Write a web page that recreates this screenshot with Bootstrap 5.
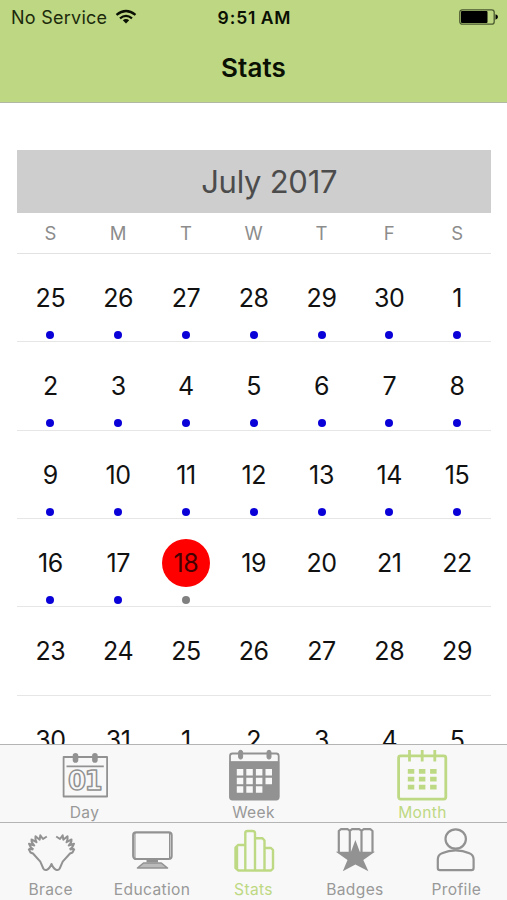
<!DOCTYPE html>
<html lang="en">
<head>
<meta charset="utf-8">
<meta name="viewport" content="width=device-width, initial-scale=1">
<title>Stats</title>
<link href="https://cdn.jsdelivr.net/npm/bootstrap@5.3.0/dist/css/bootstrap.min.css" rel="stylesheet">
<style>
  body { font-family: Inter, "Liberation Sans", sans-serif; color: #111; }
  .app { height: 900px; }
  .topbar { height: 103px; background: #bdd783; border-bottom: 1px solid #b0b8a4; color: #0a1004; }
  .status { height: 34px; padding: 0 9px 0 11px; font-size: 18px; line-height: 35px; }
  .status > * { flex: 1 1 0; }
  .carrier { letter-spacing: .25px; white-space: nowrap; color: #1c2a0c; }
  .clock { font-weight: 600; font-size: 17.5px; letter-spacing: .9px; word-spacing: -1px; }
  .page-title { font-size: 26px; font-weight: 600; line-height: 67px; letter-spacing: .1px; }
  .calendar { padding: 46.8px 16px 0 16.5px; min-height: 0; }
  .month-name { height: 63px; line-height: 64px; padding-left: 31px; background: #cecece; color: #4c4c4c; font-size: 31px; letter-spacing: -.25px; }
  .weekdays { height: 41px; line-height: 41px; font-size: 18.5px; color: #8c8c8c; border-bottom: 1px solid #e2e2e2; }
  .week { height: 88.4px; border-bottom: 1px solid #e6e6e6; font-size: 25px; letter-spacing: -.4px; }
  .num { width: 48px; height: 48px; line-height: 48px; margin-top: 20px; border-radius: 50%; }
  .today { background: #f00; color: #400; }
  .dot { width: 8px; height: 8px; margin-top: 9px; border-radius: 50%; background: #0a00d8; }
  .dot-pending { background: #808080; }
  .tabs { background: #f8f8f8; border-top: 1px solid #b4b4b4; color: #929292; font-size: 15.6px; letter-spacing: .35px; }
  .tabs svg { display: block; fill: none; stroke: currentColor; stroke-linejoin: round; }
  .range-tabs, .main-tabs { height: 78px; padding-top: 3px; }
  .tabs span { line-height: 21px; color: #999; }
  .main-tabs span { margin-top: 3px; }
  .tabs .current, .tabs .current span { color: #bed983; }
  .digits { font: bold 26px "DejaVu Sans", sans-serif; letter-spacing: 0; }
</style>
<script src="https://cdn.jsdelivr.net/npm/bootstrap@5.3.0/dist/js/bootstrap.bundle.min.js"></script>
</head>
<body class="bg-white overflow-hidden">
<div class="app d-flex flex-column overflow-hidden">
  <header class="topbar flex-shrink-0 text-center">
    <div class="status d-flex align-items-center">
      <div class="carrier d-flex align-items-center gap-2">No Service
        <svg width="22" height="16" viewBox="0 0 22 16" fill="none" stroke="#0a1004" stroke-width="2.3"><path d="M1.5 5.8Q11-1.8 20.500 5.800M5 9.300Q11 4.400 17 9.300"/><path d="M11 14.500 7.800 11.300Q11 8.900 14.200 11.300Z" fill="#0a1004" stroke="none"/></svg>
      </div>
      <div class="clock text-nowrap">9:51 AM</div>
      <div class="d-flex justify-content-end">
        <svg width="39" height="16" viewBox="0 0 39 16"><rect x=".8" y=".8" width="34.400" height="14.400" rx="2.500" fill="none" stroke="#4c5a30" stroke-width="1.300"/><rect x="2" y="2" width="26.500" height="12" rx="1"/><path d="M36.500 5.300q2.500.8 2.500 2.700t-2.500 2.700Z"/></svg>
      </div>
    </div>
    <div class="page-title">Stats</div>
  </header>

  <main class="calendar flex-grow-1 overflow-hidden text-center">
    <div class="month-name">July 2017</div>
    <div class="weekdays row g-0"><div class="col">S</div><div class="col">M</div><div class="col">T</div><div class="col">W</div><div class="col">T</div><div class="col">F</div><div class="col">S</div></div>
    <div id="weeks"></div>
  </main>

  <nav class="tabs range-tabs row g-0 flex-shrink-0">
    <div class="col d-flex flex-column align-items-center">
      <svg width="56" height="54" viewBox="0 0 56 54" stroke-width="1.800"><rect x="6.600" y="9" width="43.500" height="39.500"/><path d="M9.500 18.300H46.800"/><rect x="16.600" y="5.800" width="3.800" height="8" rx="1.900" fill="currentColor"/><rect x="36" y="5.800" width="3.800" height="8" rx="1.900" fill="currentColor"/><text class="digits" x="11 27.500" y="42.300" stroke-width="1.500">01</text></svg>
      <span>Day</span>
    </div>
    <div class="col d-flex flex-column align-items-center">
      <svg width="56" height="54" viewBox="0 0 56 54"><rect x="4" y="5.500" width="48.700" height="46" rx="2.500" stroke-width="1.800"/><path d="M4 13.700H52.700V49q0 2.500-2.500 2.500H6.500Q4 51.500 4 49Z" fill="currentColor"/><rect x="12.600" y="2.300" width="4" height="8.800" rx="2" fill="currentColor"/><rect x="41" y="2.300" width="4" height="8.800" rx="2" fill="currentColor"/><path fill="#f8f8f8" stroke="none" d="M10.800 21h6.500v6.500h-6.500zM20.300 21h6.500v6.500h-6.500zM29.900 21h6.500v6.500h-6.500zM39.500 21h6.500v6.500h-6.500zM10.800 29.700h6.500v6.500h-6.500zM20.300 29.700h6.500v6.500h-6.500zM29.900 29.700h6.500v6.500h-6.500zM39.500 29.700h6.500v6.500h-6.500zM10.800 38.300h6.500v6.500h-6.500zM20.300 38.300h6.500v6.500h-6.500zM29.900 38.300h6.500v6.500h-6.500z"/></svg>
      <span>Week</span>
    </div>
    <div class="col current d-flex flex-column align-items-center">
      <svg width="56" height="54" viewBox="0 0 56 54" stroke-width="2.800"><rect x="3.600" y="7.900" width="47.200" height="43.200" rx="2"/><path d="M14.500 2v11.500M27.200 2v11.500M39.800 2v11.500"/><path fill="currentColor" stroke="none" d="M12.800 21h6.500v4.800h-6.500zM23.900 21h6.500v4.800h-6.500zM35.100 21h6.500v4.800h-6.500zM12.800 28.800h6.500v4.800h-6.500zM23.900 28.800h6.500v4.800h-6.500zM35.100 28.800h6.500v4.800h-6.500zM12.800 36.700h6.500v4.800h-6.500zM23.900 36.700h6.500v4.800h-6.500zM35.100 36.700h6.500v4.800h-6.500z"/></svg>
      <span>Month</span>
    </div>
  </nav>

  <nav class="tabs main-tabs row g-0 flex-shrink-0">
    <div class="col d-flex flex-column align-items-center">
      <svg width="56" height="50" viewBox="0 0 56 50" stroke-width="2"><path d="M5.600 22.800 7.500 26.500 10 27.500 17.300 35.700 20.300 42.500Q21.500 44.500 24 43.700 26.300 43 28.500 38 30.700 43 33 43.700 35.500 44.500 36.700 42.500L39.700 35.700 47 27.500 49.500 26.500 51.400 22.800"/><path d="M10 23.500 5.600 22.800M10.500 23.500Q7.500 22 6 17.700L11.300 19.500Q8.300 17 8.500 13.500L13.500 16.200Q11.800 13.500 12.500 10.300L16.700 13.700 17.300 9.300 20 13 23.800 10.500M47 23.500 51.400 22.800M46.500 23.500Q49.500 22 51 17.700L45.700 19.500Q48.700 17 48.500 13.500L43.500 16.200Q45.200 13.500 44.500 10.300L40.300 13.700 39.700 9.300 37 13 33.200 10.500"/></svg>
      <span>Brace</span>
    </div>
    <div class="col d-flex flex-column align-items-center">
      <svg width="56" height="50" viewBox="0 0 56 50" stroke-width="2.200"><rect x="9.200" y="6.300" width="38.400" height="26.700" rx="3"/><path d="M45.500 7v25M11 7v25" stroke-width="1"/><path d="M22.500 33.500h11.500v3H22.500Z" fill="currentColor" stroke="none"/><path d="M19.500 37H37.300L43.500 42H13.500Z" fill="#bbb" stroke-width="1.600"/></svg>
      <span>Education</span>
    </div>
    <div class="col current d-flex flex-column align-items-center">
      <svg width="56" height="50" viewBox="0 0 56 50" stroke-width="2.400"><path d="M19.300 19H12L9.500 21.500V42L12.500 44.500H19.300ZM19.300 44.500V7Q19.300 5 21.500 5H26.500Q29 5 29 7V44.500ZM29 12.300H36.500L38.500 14.500V44.500H29M38.500 22H45L47 24V42.500L45 44.500H38.500M11 20v24"/></svg>
      <span>Stats</span>
    </div>
    <div class="col d-flex flex-column align-items-center">
      <svg width="56" height="50" viewBox="0 0 56 50" stroke-width="2.200"><path d="M11.800 26V5l2-1.800H20.800l2 1.800V26M22.800 5l2-1.800H32.500l2 1.800V26M34.500 5l2-1.800H43.500l2 1.800V26"/><path d="M28.400 14 32.800 25.800H48L36.300 34 41.400 45.300 28.400 38.500 15.800 45.300 20.500 34 8.800 25.800H24Z" fill="currentColor" stroke="none"/></svg>
      <span>Badges</span>
    </div>
    <div class="col d-flex flex-column align-items-center">
      <svg width="56" height="50" viewBox="0 0 56 50" stroke-width="2.200"><ellipse cx="27.700" cy="13" rx="10.200" ry="9.700"/><path d="M9.800 42V33.500Q9.800 29 14 27.300 20.500 24.300 27.700 24.300T41.400 27.300Q45.600 29 45.600 33.500V42Q45.600 44.200 43.500 44.200H12Q9.800 44.200 9.800 42Z"/></svg>
      <span>Profile</span>
    </div>
  </nav>
</div>
<script>
  // Six weeks starting Sunday, June 25; entries are logged through July 17.
  const start = new Date(2017, 5, 25);
  let html = '';
  for (let w = 0; w < 6; w++) {
    html += '<div class="week row g-0">';
    for (let d = 0; d < 7; d++) {
      const i = w * 7 + d;
      const day = new Date(2017, 5, start.getDate() + i).getDate();
      html += '<div class="col d-flex flex-column align-items-center"><div class="num' + (i === 23 ? ' today' : '') + '">' + day + '</div>'
        + (i < 24 ? '<div class="dot' + (i === 23 ? ' dot-pending' : '') + '"></div>' : '') + '</div>';
    }
    html += '</div>';
  }
  document.getElementById('weeks').innerHTML = html;
</script>
</body>
</html>
